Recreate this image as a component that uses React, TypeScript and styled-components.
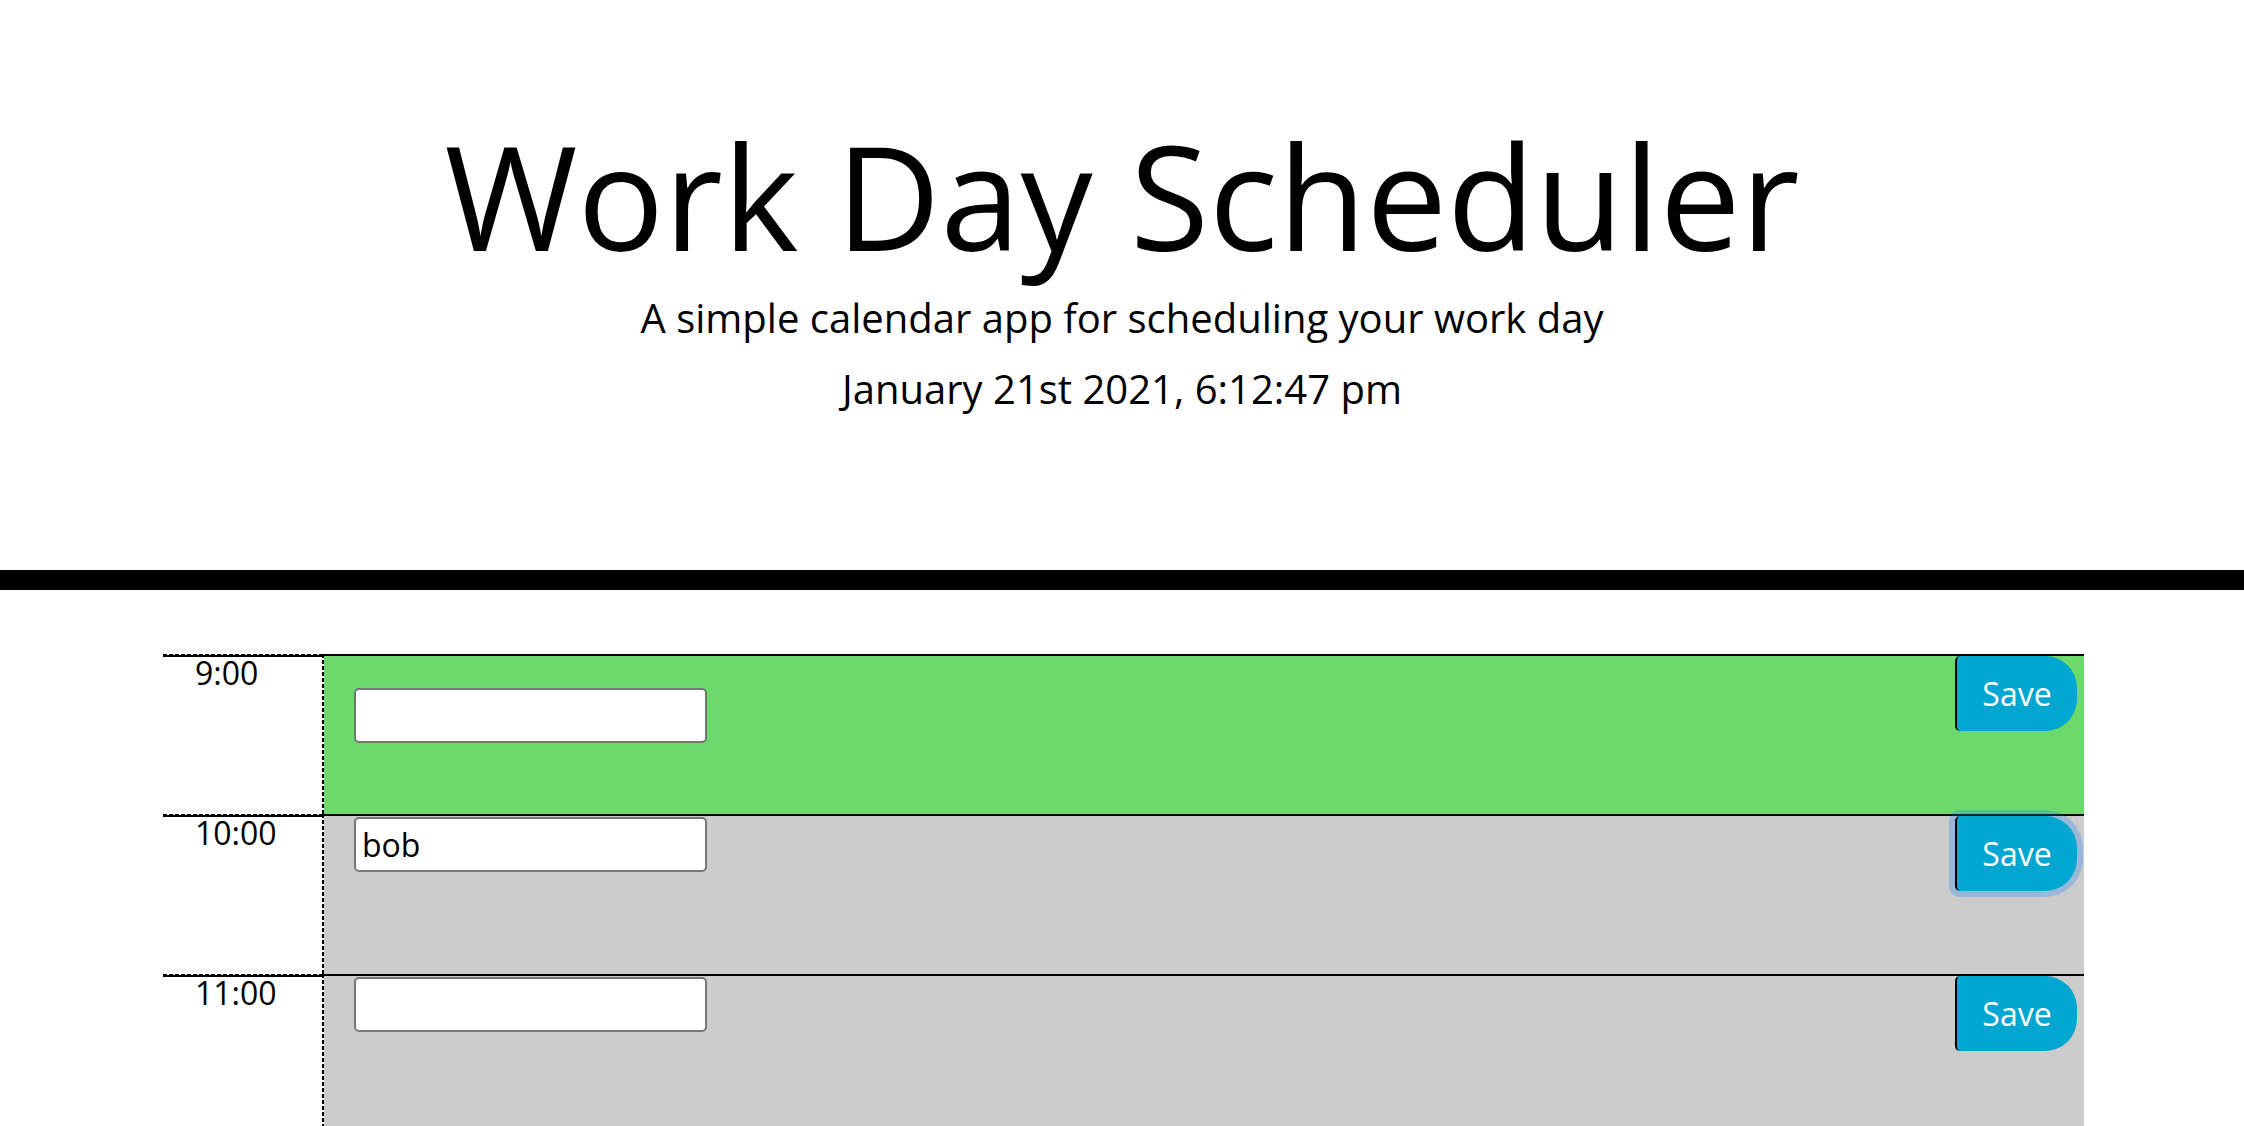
import React from "react";
import styled, { createGlobalStyle } from "styled-components";

type Tense = "past" | "present" | "future";

interface Slot {
  hour: string;
  tense: Tense;
  text: string;
  focused?: boolean;
}

const slots: Slot[] = [
  { hour: "9:00", tense: "future", text: "" },
  { hour: "10:00", tense: "past", text: "bob", focused: true },
  { hour: "11:00", tense: "past", text: "" },
];

const tenseColors: Record<Tense, string> = {
  past: "#cccccc",
  present: "#ff6961",
  future: "#6cd96d",
};

const App: React.FunctionComponent = () => {
  return (
    <>
      <GlobalStyle />
      <Header>
        <Title>Work Day Scheduler</Title>
        <Lead>A simple calendar app for scheduling your work day</Lead>
        <Lead>January 21st 2021, 6:12:47 pm</Lead>
      </Header>
      <Container>
        {slots.map((slot, i) => (
          <Row key={slot.hour}>
            <Hour>{slot.hour}</Hour>
            <Block tense={slot.tense}>
              <Field
                type="text"
                defaultValue={slot.text}
                $offset={i === 0 ? 32 : 1}
              />
              <SaveButton $focused={slot.focused}>Save</SaveButton>
            </Block>
          </Row>
        ))}
      </Container>
    </>
  );
};

const GlobalStyle = createGlobalStyle`
  html, body {
    margin: 0;
    padding: 0;
    background: #ffffff;
  }
  body {
    font-family: "Open Sans", "Liberation Sans", sans-serif;
    color: #000000;
    overflow: hidden;
  }
`;

const Header = styled.header`
  padding: 110px 0 146px;
  margin-bottom: 64px;
  border-bottom: 20px solid #000000;
  text-align: center;
`;

const Title = styled.h1`
  margin: 0 0 2px;
  font-size: 144px;
  font-weight: 400;
  line-height: 170px;
`;

const Lead = styled.p`
  margin: 0;
  font-size: 40px;
  font-weight: 400;
  line-height: 71px;
`;

const Container = styled.main`
  padding: 0 160px 0 163px;
`;

const Row = styled.div`
  display: flex;
  height: 160px;
`;

const Hour = styled.div`
  box-sizing: border-box;
  width: 161px;
  padding: 3px 0 0 32px;
  font-size: 32px;
  line-height: 32px;
  background:
    repeating-linear-gradient(90deg, #000 0 4px, transparent 4px 6px) left top / 100% 1px no-repeat,
    linear-gradient(#000, #000) left 1px / 100% 2px no-repeat,
    repeating-linear-gradient(180deg, #000 0 4px, transparent 4px 6px) right top / 2px 100% no-repeat,
    #ffffff;
`;

const Block = styled.div<{ tense: Tense }>`
  flex: 1;
  display: flex;
  align-items: flex-start;
  justify-content: space-between;
  padding: 0 7px 0 30px;
  border-top: 2px solid #000000;
  background: ${(p) => tenseColors[p.tense]};
`;

const Field = styled.input<{ $offset: number }>`
  box-sizing: border-box;
  width: 353px;
  height: 55px;
  margin-top: ${(p) => p.$offset}px;
  padding: 0 6px;
  border: 2px solid #767676;
  border-radius: 5px;
  background: #ffffff;
  font-family: "Open Sans", "Liberation Sans", sans-serif;
  font-size: 32px;
  color: #000000;
  outline: none;
`;

const SaveButton = styled.button<{ $focused?: boolean }>`
  box-sizing: border-box;
  width: 122px;
  height: 75px;
  padding: 0;
  border: none;
  border-left: 2px solid #000000;
  border-radius: 5px 32px 32px 5px;
  background: #01a6d1;
  color: #ffffff;
  font-family: "Open Sans", "Liberation Sans", sans-serif;
  font-size: 32px;
  line-height: 75px;
  cursor: pointer;
  box-shadow: ${(p) => (p.$focused ? "0 0 0 6px rgba(0, 123, 255, 0.25)" : "none")};
`;

export default App;
